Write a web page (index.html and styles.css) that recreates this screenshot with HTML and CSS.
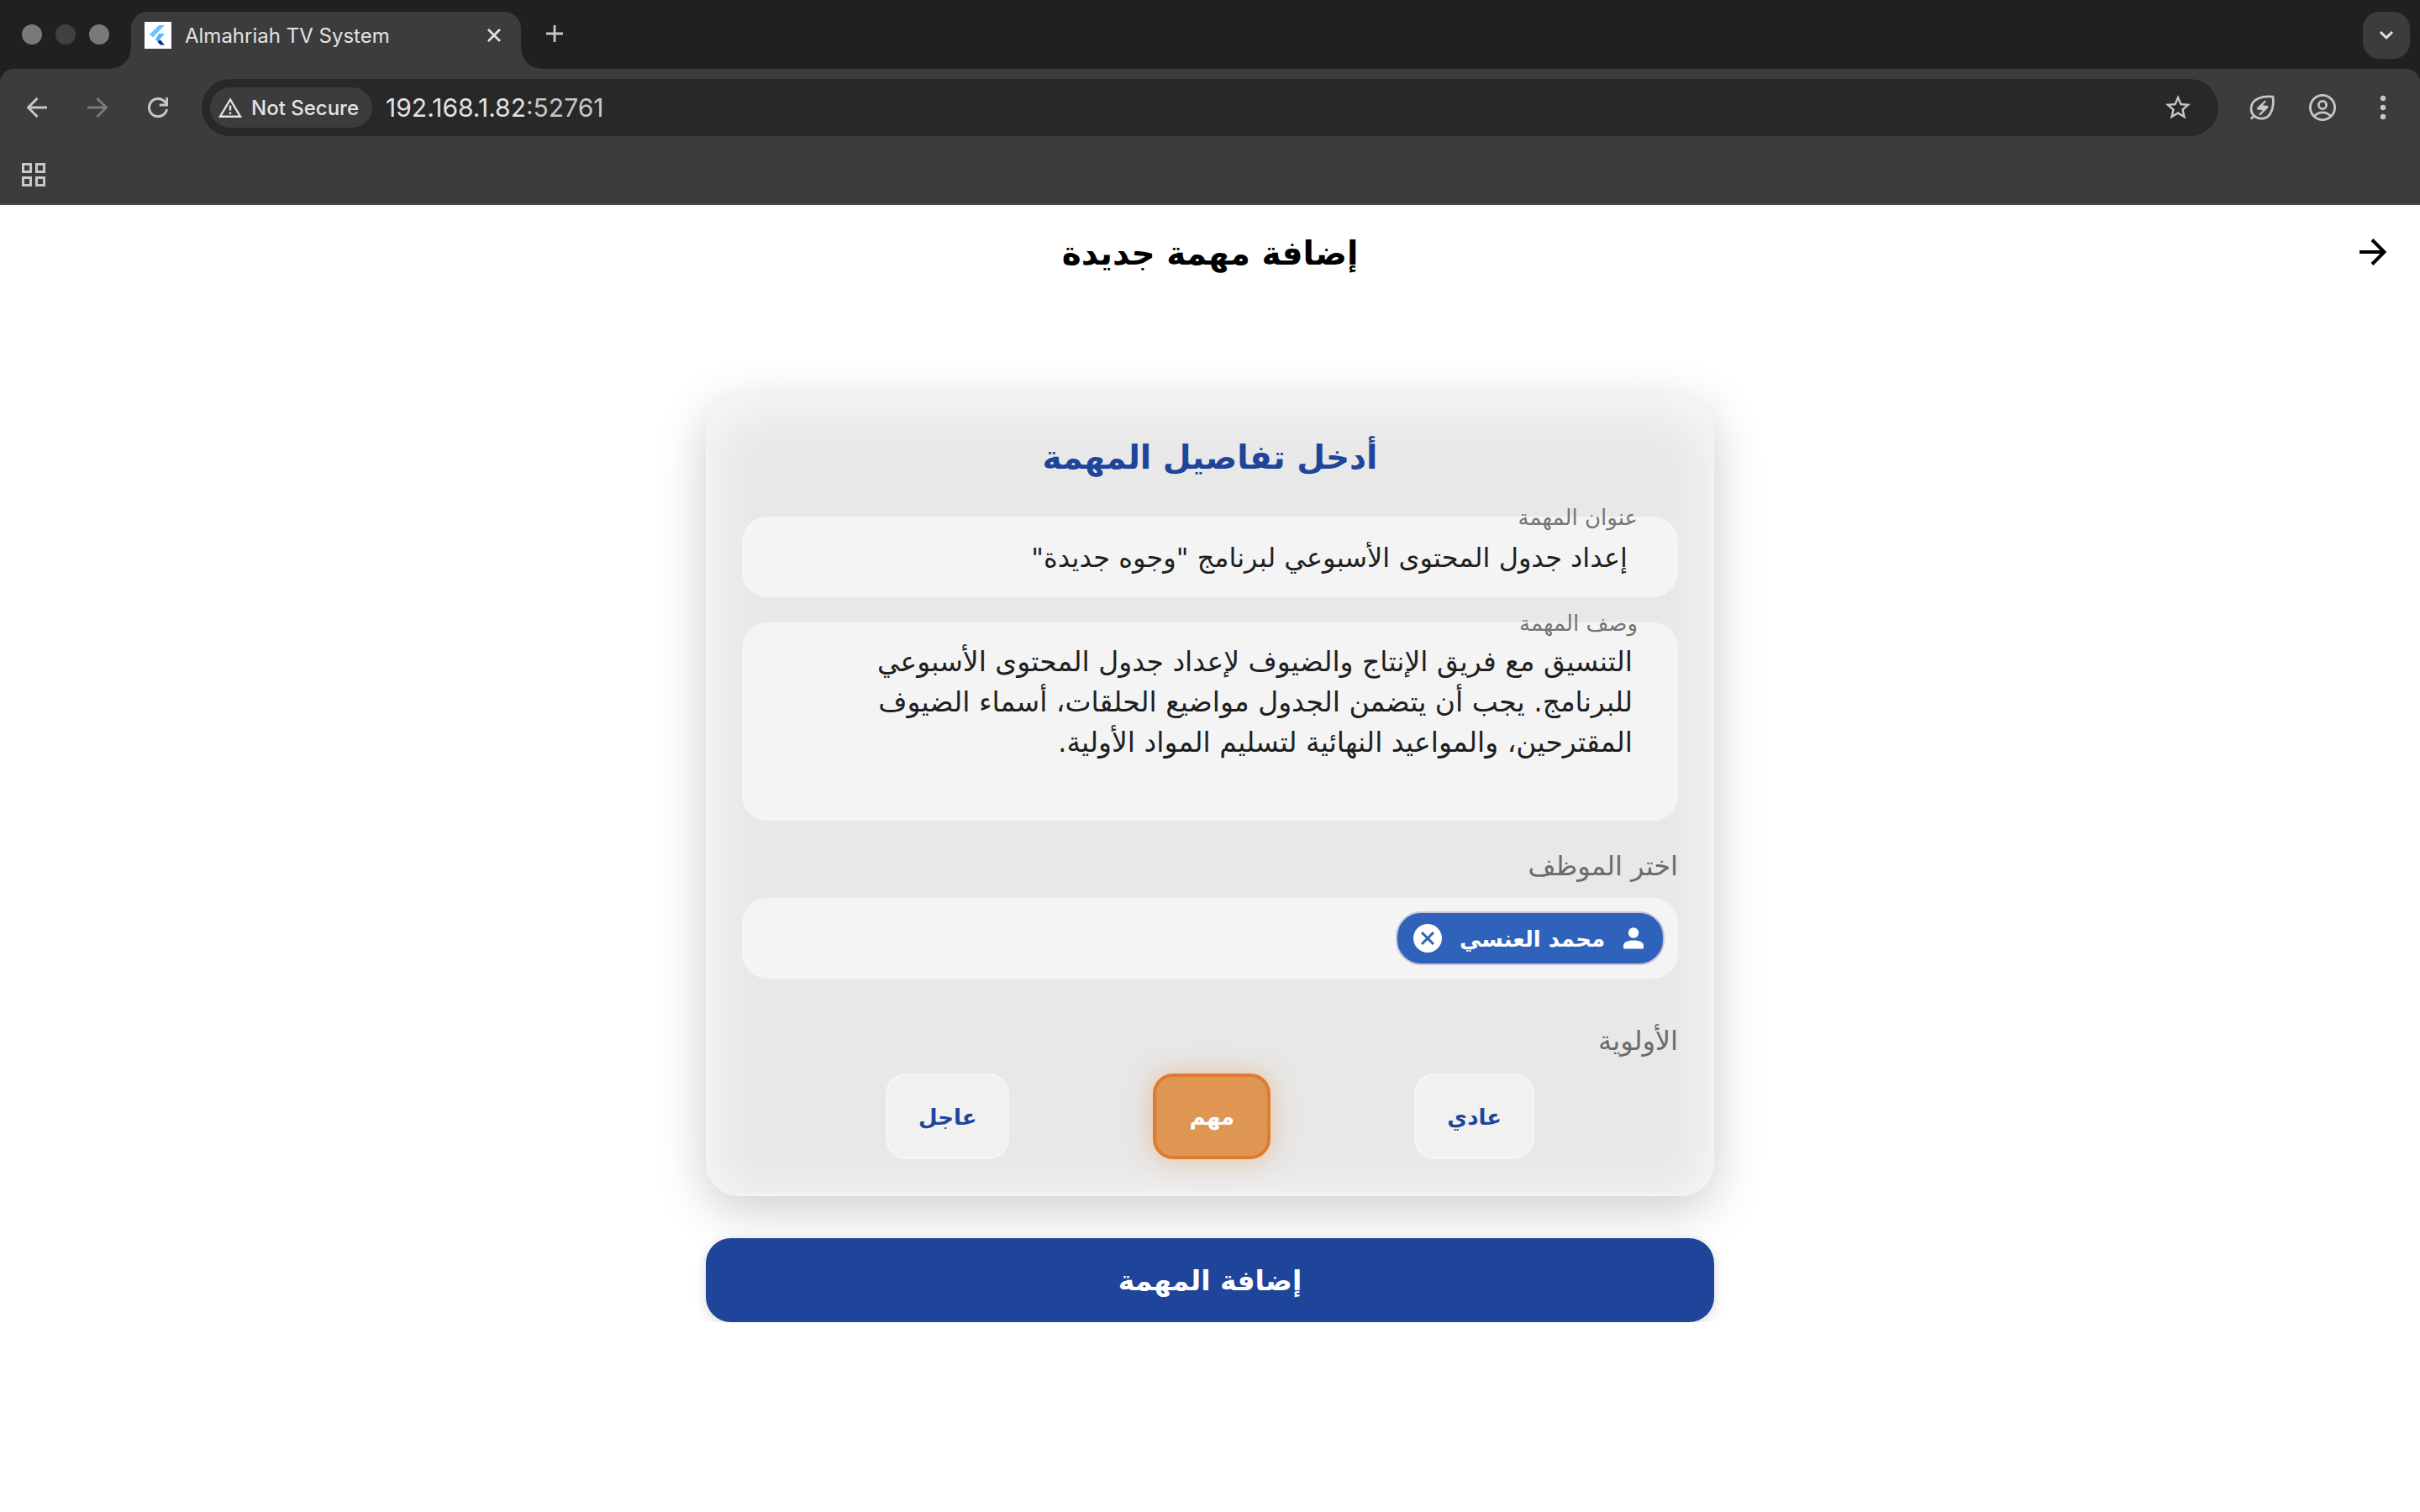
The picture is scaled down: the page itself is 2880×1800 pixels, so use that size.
FILE: index.html
```html
<!DOCTYPE html>
<html lang="ar" dir="rtl">
<head>
<meta charset="utf-8">
<title>Almahriah TV System</title>
<link rel="stylesheet" href="styles.css">
</head>
<body>
<header class="browser" dir="ltr" lang="en">
  <div class="tabstrip">
    <div class="lights"><span class="light"></span><span class="light light-dim"></span><span class="light"></span></div>
    <div class="tab">
      <svg class="favicon" viewBox="0 0 32 32" aria-hidden="true"><path fill="#fff" d="M0 0h32v32H0z"/><path fill="#6cc4fb" d="M17 4h7L10 18.500 6 15z"/><path fill="#54b9f8" d="M17 14h7l-6 7 4 3-3 3-6-6z"/><path fill="#0b2f8f" d="M15.500 24l3-2.500L24 27.500h-5z"/></svg>
      <span class="tab-title">Almahriah TV System</span>
      <button class="icon-button tab-close" aria-label="Close tab"><svg width="16" height="16" viewBox="0 0 16 16"><path d="M1 1l14 14M15 1L1 15" stroke="#e3e3e3" stroke-width="2.800"/></svg></button>
    </div>
    <button class="icon-button new-tab" aria-label="New tab"><svg width="20" height="20" viewBox="0 0 20 20"><path d="M10 0v20M0 10h20" stroke="#c7c7c7" stroke-width="2.800"/></svg></button>
    <button class="icon-button tab-search" aria-label="Search tabs"><svg width="18" height="12" viewBox="0 0 18 12"><path d="M2 2l7 7 7-7" fill="none" stroke="#e3e3e3" stroke-width="3"/></svg></button>
  </div>
  <div class="toolbar">
    <div class="nav">
      <button class="icon-button" aria-label="Back"><svg width="24" height="24" viewBox="0 0 24 24"><path d="M24 12H2M12.500 1L1.500 12l11 11" fill="none" stroke="#c7c7c7" stroke-width="3"/></svg></button>
      <button class="icon-button" aria-label="Forward"><svg width="24" height="24" viewBox="0 0 24 24"><path d="M0 12h22M11.500 1l11 11-11 11" fill="none" stroke="#7b7b7b" stroke-width="3"/></svg></button>
      <button class="icon-button" aria-label="Reload"><svg width="24" height="24" viewBox="0 0 24 24"><path d="M22.500 14A10.600 10.600 0 1 1 20 5l3 3.500M22.700 0v9h-9" fill="none" stroke="#c7c7c7" stroke-width="3"/></svg></button>
    </div>
    <div class="omnibox">
      <button class="security"><svg width="28" height="24" viewBox="0 0 28 24"><path d="M14 2.500L26 22.700H2z" fill="none" stroke="#e3e3e3" stroke-width="2.400"/><path d="M14 9.500v6M14 17.500v2.500" stroke="#e3e3e3" stroke-width="2.400"/></svg>Not Secure</button>
      <span class="url">192.168.1.82<span class="port">:52761</span></span>
      <button class="icon-button" aria-label="Bookmark"><svg width="36" height="36" viewBox="0 0 24 24"><path fill="#c7c7c7" d="M22 9.240l-7.190-.62L12 2 9.190 8.630 2 9.240l5.460 4.730L5.820 21 12 17.270 18.180 21l-1.630-7.030L22 9.240zM12 15.400l-3.760 2.270 1-4.280-3.320-2.880 4.380-.38L12 6.100l1.710 4.040 4.380.38-3.320 2.880 1 4.280L12 15.400z"/></svg></button>
    </div>
    <div class="actions">
      <button class="icon-button" aria-label="Energy saver"><svg width="32" height="32" viewBox="0 0 32 32" fill="none" stroke="#c7c7c7"><path stroke-width="2.800" stroke-linejoin="round" d="M29 3.200C17 2 2.800 5 3 17.500 3.200 26 11 30.500 18.500 28.800 27 27 30.500 15 29 3.200zM7.500 25L2.800 29.500"/><path fill="#c7c7c7" stroke="none" d="M19.500 7.500L9.500 16.800l1 1.700 6.500.8-5 4.700 1.800 1.500 10-9.800-1-1.700-6-.7 4.200-4.500z"/></svg></button>
      <button class="icon-button" aria-label="Profile"><svg width="32" height="32" viewBox="0 0 32 32" fill="none" stroke="#c7c7c7" stroke-width="2.800"><circle cx="16" cy="16" r="14.600"/><circle cx="16" cy="13" r="4.600"/><path d="M6.500 26c5-5.600 14-5.600 19 0"/></svg></button>
      <button class="icon-button" aria-label="Menu"><svg width="32" height="32" viewBox="0 0 32 32" fill="#c7c7c7"><circle cx="16" cy="5" r="3.200"/><circle cx="16" cy="16" r="3.200"/><circle cx="16" cy="27" r="3.200"/></svg></button>
    </div>
  </div>
  <div class="bookmarks">
    <button class="icon-button" aria-label="Apps"><svg width="28" height="28" viewBox="0 0 28 28" fill="none" stroke="#c7c7c7" stroke-width="3"><path d="M1.500 1.500h9v9h-9zM17.500 1.500h9v9h-9zM1.500 17.500h9v9h-9zM17.500 17.500h9v9h-9z"/></svg></button>
  </div>
</header>

<nav class="appbar">
  <button class="icon-button back" aria-label="رجوع"><svg width="32" height="32" viewBox="0 0 32 32"><path d="M0 16h29M15 1.500L29.500 16 15 30.500" fill="none" stroke="#000" stroke-width="4"/></svg></button>
  <h1 class="page-title">إضافة مهمة جديدة</h1>
</nav>

<main class="content">
  <form class="task-form">
    <section class="card">
      <h2 class="card-title">أدخل تفاصيل المهمة</h2>
      <div class="field">
        <label class="floating" for="task-title">عنوان المهمة</label>
        <input class="input" id="task-title" type="text" value="إعداد جدول المحتوى الأسبوعي لبرنامج &quot;وجوه جديدة&quot;">
      </div>
      <div class="field">
        <label class="floating" for="task-desc">وصف المهمة</label>
        <textarea class="input textarea" id="task-desc" rows="4">التنسيق مع فريق الإنتاج والضيوف لإعداد جدول المحتوى الأسبوعي
للبرنامج. يجب أن يتضمن الجدول مواضيع الحلقات، أسماء الضيوف
المقترحين، والمواعيد النهائية لتسليم المواد الأولية.</textarea>
      </div>
      <h3 class="section-label">اختر الموظف</h3>
      <div class="picker">
        <div class="chip">
          <svg width="26" height="26" viewBox="0 0 26 26" fill="#fff" aria-hidden="true"><circle cx="13" cy="6.500" r="6.200"/><path d="M1 21.500C1 17 8 15.500 13 15.500s12 1.500 12 6V24a1.500 1.500 0 0 1-1.500 1.500h-21A1.500 1.500 0 0 1 1 24z"/></svg>
          <span class="chip-name">محمد العنسي</span>
          <button class="icon-button" type="button" aria-label="إزالة"><svg width="34" height="34" viewBox="0 0 34 34"><circle cx="17" cy="17" r="17" fill="#fff"/><path d="M10 10l14 14M24 10L10 24" stroke="#2f63bb" stroke-width="3"/></svg></button>
        </div>
      </div>
      <h3 class="section-label priority-label">الأولوية</h3>
      <div class="priorities">
        <button class="priority" type="button">عادي</button>
        <button class="priority priority-on" type="button">مهم</button>
        <button class="priority" type="button">عاجل</button>
      </div>
    </section>
    <button class="submit" type="button">إضافة المهمة</button>
  </form>
</main>
</body>
</html>
```
FILE: styles.css
```css
* { box-sizing: border-box; }

body {
  margin: 0;
  background: #fff;
  font-family: "DejaVu Sans", sans-serif;
  color: #1f1f1f;
}

button, input, textarea { font: inherit; color: inherit; }

h1, h2, h3 { margin: 0; }

.icon-button {
  display: flex;
  align-items: center;
  justify-content: center;
  padding: 0;
  border: 0;
  background: none;
}

svg { display: block; flex: none; }

/* Browser window */
.browser {
  background: #3c3c3c;
  border-bottom: 2px solid #4a484a;
  font-family: Inter, "Liberation Sans", sans-serif;
  color: #e3e3e3;
}

.tabstrip {
  display: flex;
  align-items: flex-start;
  height: 82px;
  padding: 14px 12px 0 26px;
  background: #1f2120;
}

.lights {
  display: flex;
  gap: 16px;
  margin-right: 26px;
  padding-top: 15px;
}

.light {
  width: 24px;
  height: 24px;
  border-radius: 50%;
  background: #797979;
}

.light-dim { background: #3f4140; }

.tab {
  position: relative;
  display: flex;
  align-items: center;
  width: 464px;
  height: 68px;
  padding: 0 24px 12px 16px;
  border-radius: 20px 20px 0 0;
  background: #3c3c3c;
}

.tab::before,
.tab::after {
  content: "";
  position: absolute;
  bottom: 0;
  width: 24px;
  height: 24px;
}

.tab::before {
  right: 100%;
  background: radial-gradient(circle at 0 0, transparent 23px, #3c3c3c 24px);
}

.tab::after {
  left: 100%;
  background: radial-gradient(circle at 100% 0, transparent 23px, #3c3c3c 24px);
}

.favicon { width: 32px; height: 32px; }

.tab-title {
  flex: 1;
  margin-left: 16px;
  font-size: 24px;
}

.new-tab { margin-left: 30px; padding-top: 16px; }

.tab-search {
  width: 56px;
  height: 56px;
  margin-left: auto;
  border-radius: 20px;
  background: #3c3c3c;
}

.toolbar {
  display: flex;
  align-items: center;
  height: 92px;
  padding: 0 28px 0 32px;
  border-radius: 16px 16px 0 0;
  background: #3c3c3c;
  box-shadow: 0 -16px 0 -16px #1f2120;
}

.nav { display: flex; gap: 48px; margin-right: 40px; }

.omnibox {
  flex: 1;
  display: flex;
  align-items: center;
  height: 68px;
  padding: 0 30px 0 10px;
  border-radius: 34px;
  background: #282828;
}

.security {
  display: flex;
  align-items: center;
  gap: 11px;
  height: 48px;
  padding: 0 16px 0 10px;
  border: 0;
  border-radius: 24px;
  background: #3c3c3c;
  font-size: 24px;
  font-weight: 500;
}

.url { flex: 1; margin-left: 16px; font-size: 30px; }

.port { color: #c7c7c7; }

.actions { display: flex; gap: 40px; margin-left: 36px; }

.bookmarks { height: 68px; padding: 20px 26px; background: #3c3c3c; }

/* The strip colour shows behind the toolbar's rounded top corners */
.browser { background: #1f2120; }

/* App */
.appbar {
  display: grid;
  grid-template-columns: 1fr auto 1fr;
  align-items: center;
  height: 112px;
  padding: 0 40px;
}

.back { justify-self: start; }

.page-title { padding-top: 2px; font-size: 39px; font-weight: 700; color: #000; }

.task-form {
  width: 100%;
  max-width: 1200px;
  margin: 114px auto 0;
}

.card {
  padding: 39px 40px 41px;
  border: 3px solid #f3f3f3;
  border-radius: 40px;
  background: #e8e8e8;
  box-shadow: 0 16px 60px rgba(0, 0, 0, 0.2), inset 0 12px 64px rgba(255, 255, 255, 0.8);
}

.card-title {
  margin-bottom: 38px;
  font-size: 39px;
  line-height: 65px;
  font-weight: 700;
  text-align: center;
  color: #1f459b;
}

.field { position: relative; margin-bottom: 30px; }

.floating {
  position: absolute;
  top: -15px;
  right: 48px;
  font-size: 26px;
  line-height: 32px;
  color: #757575;
}

.input {
  display: block;
  width: 100%;
  height: 96px;
  padding: 2px 60px 0;
  border: 0;
  border-radius: 30px;
  background: #f4f4f4;
  font-size: 32px;
  line-height: 48px;
}

.textarea {
  height: 236px;
  padding: 23px 54px;
  font-size: 33px;
  resize: none;
  overflow: hidden;
}

.section-label {
  margin-bottom: 14px;
  font-size: 32px;
  line-height: 48px;
  font-weight: 400;
  color: #6b6b6b;
}

.picker {
  height: 96px;
  padding: 16px;
  border-radius: 30px;
  background: #f4f4f4;
}

.chip {
  display: flex;
  align-items: center;
  gap: 21px;
  width: max-content;
  height: 64px;
  padding: 0 22px 0 19px;
  border: 2px solid #cbc4d0;
  border-radius: 30px;
  background: #2f63bb;
  color: #fff;
}

.chip-name { padding-top: 2px; font-size: 26px; font-weight: 700; }

.priority-label { margin-top: 50px; margin-bottom: 15px; }

.priorities { display: flex; justify-content: space-evenly; }

.priority {
  height: 102px;
  min-width: 140px;
  padding: 2px 36px 0;
  border: 3px solid #f4f4f4;
  border-radius: 24px;
  background: #f1f1f1;
  font-size: 26px;
  font-weight: 700;
  color: #1f459b;
}

.priority-on {
  border: 4px solid #df7b2f;
  background: #e09653;
  box-shadow: 0 0 32px rgba(224, 150, 83, 0.5);
  color: #fff;
}

.submit {
  display: block;
  width: 100%;
  height: 100px;
  margin-top: 50px;
  border: 0;
  border-radius: 30px;
  background: #1f459b;
  box-shadow: 0 4px 16px rgba(0, 0, 0, 0.14);
  font-size: 33px;
  font-weight: 700;
  color: #fff;
}
```
